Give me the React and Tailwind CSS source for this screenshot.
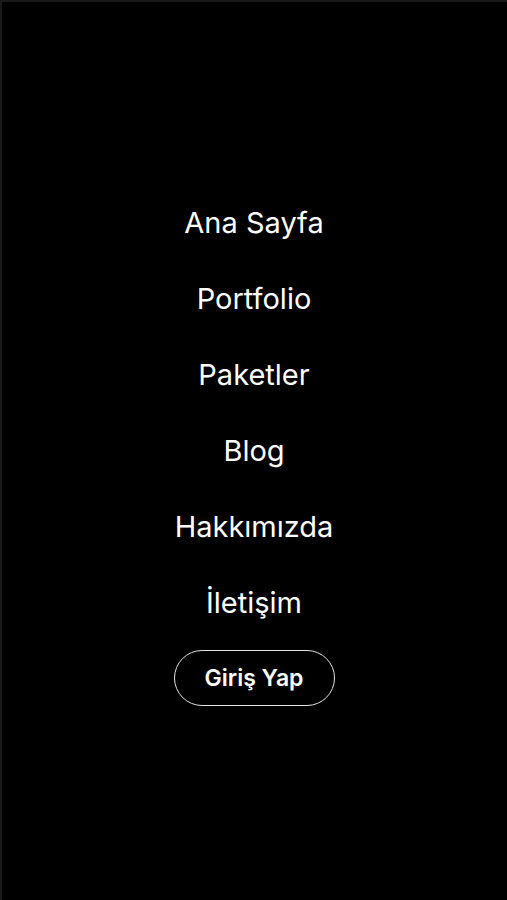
export default function App() {
  const items = ["Ana Sayfa", "Portfolio", "Paketler", "Blog", "Hakkımızda", "İletişim"];
  return (
    <div className="w-[507px] h-[900px] bg-black border-t-2 border-l-2 border-[#1a1a1a] flex flex-col items-center" style={{ fontFamily: "Inter, 'Noto Sans', sans-serif" }}>
      <nav className="flex flex-col items-center mt-[182px] -ml-[1px]">
        {items.map((t) => (
          <a key={t} className="h-[76px] flex items-center text-white text-[29px] leading-none">{t}</a>
        ))}
        <button className="mt-[10px] w-[161px] h-[56px] rounded-full border border-[#e5e5e5] text-white text-[23px] font-semibold">Giriş Yap</button>
      </nav>
    </div>
  );
}
